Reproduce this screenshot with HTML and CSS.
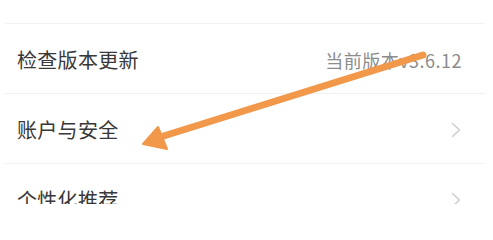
FILE: index.html
```html
<!DOCTYPE html>
<html lang="zh-CN">
<head>
<meta charset="utf-8">
<title>设置</title>
<link rel="stylesheet" href="styles.css">
</head>
<body>
<div class="page">
  <ul class="list">
    <li class="row">
      <span class="label">清除缓存</span>
      <span class="value">当前缓存大小 35.68MB</span>
    </li>
    <li class="row">
      <span class="label">检查版本更新</span>
      <span class="value">当前版本v3.6.12</span>
    </li>
    <li class="row">
      <span class="label">账户与安全</span>
      <svg class="chev" width="10" height="16" viewBox="0 0 10 16"><polyline points="1.5,1.5 8.5,8 1.5,14.5" fill="none" stroke="#cfcfcf" stroke-width="1.6" stroke-linecap="round" stroke-linejoin="round"/></svg>
    </li>
    <li class="row">
      <span class="label">个性化推荐</span>
      <svg class="chev" width="10" height="16" viewBox="0 0 10 16"><polyline points="1.5,1.5 8.5,8 1.5,14.5" fill="none" stroke="#cfcfcf" stroke-width="1.6" stroke-linecap="round" stroke-linejoin="round"/></svg>
    </li>
  </ul>
  <svg class="arrow" width="493" height="204" viewBox="0 0 493 204">
    <line x1="423" y1="55" x2="154" y2="139" stroke="#F2984A" stroke-width="7" stroke-linecap="round"/>
    <polygon points="143,144 158,127 167,149" fill="#F2984A" stroke="#F2984A" stroke-width="2" stroke-linejoin="round"/>
  </svg>
</div>
</body>
</html>
```

FILE: styles.css
```css
html, body {
  margin: 0;
  padding: 0;
  background: #ffffff;
  overflow: hidden;
}

.page {
  position: relative;
  width: 493px;
  height: 204px;
  overflow: hidden;
  font-family: "Noto Sans CJK SC", "Noto Sans", sans-serif;
}

.list {
  list-style: none;
  margin: -46px 8px 0 5px;
  padding: 0;
}

.row {
  display: flex;
  align-items: center;
  justify-content: space-between;
  padding: 3px 23px 0 12px;
  box-sizing: content-box;
  border-bottom: 1px solid #f1f1f1;
  height: 66px;
}

.label {
  font-size: 20px;
  color: #383838;
  line-height: 1;
  letter-spacing: 0.3px;
}

.value {
  font-size: 18px;
  color: #8c8c8c;
  line-height: 1;
  letter-spacing: 0.5px;
}

.chev {
  display: block;
  margin-right: 1px;
}

.arrow {
  position: absolute;
  left: 0;
  top: 0;
  pointer-events: none;
}
```
